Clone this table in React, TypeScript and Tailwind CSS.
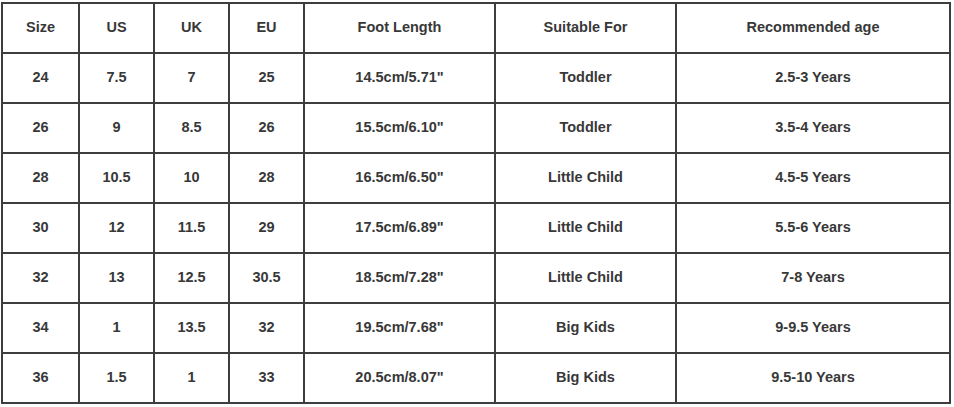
import React from 'react';

const headers = ['Size', 'US', 'UK', 'EU', 'Foot Length', 'Suitable For', 'Recommended age'];

const rows = [
  ['24', '7.5', '7', '25', '14.5cm/5.71"', 'Toddler', '2.5-3 Years'],
  ['26', '9', '8.5', '26', '15.5cm/6.10"', 'Toddler', '3.5-4 Years'],
  ['28', '10.5', '10', '28', '16.5cm/6.50"', 'Little Child', '4.5-5 Years'],
  ['30', '12', '11.5', '29', '17.5cm/6.89"', 'Little Child', '5.5-6 Years'],
  ['32', '13', '12.5', '30.5', '18.5cm/7.28"', 'Little Child', '7-8 Years'],
  ['34', '1', '13.5', '32', '19.5cm/7.68"', 'Big Kids', '9-9.5 Years'],
  ['36', '1.5', '1', '33', '20.5cm/8.07"', 'Big Kids', '9.5-10 Years'],
];

const widths = ['w-[77px]', 'w-[75px]', 'w-[75px]', 'w-[75px]', 'w-[191px]', 'w-[181px]', 'w-[274px]'];

export default function App() {
  return (
    <div className="w-[954px] h-[407px] bg-white pl-[1px] pt-[2px] font-['Liberation_Sans',Arial,sans-serif]">
      <table className="table-fixed border-collapse w-[949px] text-[14.5px] font-bold text-[#383838]">
        <colgroup>
          {widths.map((w, i) => (
            <col key={i} className={w} />
          ))}
        </colgroup>
        <thead>
          <tr className="h-[50px]">
            {headers.map((h) => (
              <th key={h} className="border-2 border-[#3d3d3d] text-center align-middle font-bold p-0 pb-[1px]">
                {h}
              </th>
            ))}
          </tr>
        </thead>
        <tbody>
          {rows.map((r) => (
            <tr key={r[0]} className="h-[50px]">
              {r.map((c, i) => (
                <td key={i} className="border-2 border-[#3d3d3d] text-center align-middle p-0 pb-[1px]">
                  {c}
                </td>
              ))}
            </tr>
          ))}
        </tbody>
      </table>
    </div>
  );
}
